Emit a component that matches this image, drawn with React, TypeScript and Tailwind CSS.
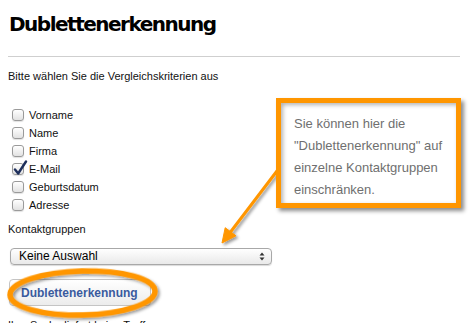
import React from "react";

const items = [
  { label: "Vorname", checked: false },
  { label: "Name", checked: false },
  { label: "Firma", checked: false },
  { label: "E-Mail", checked: true },
  { label: "Geburtsdatum", checked: false },
  { label: "Adresse", checked: false },
];

function Box({ checked }: { checked: boolean }) {
  return (
    <span className="relative inline-block w-[12px] h-[12px] rounded-[3px] border border-[#9a9a9a] bg-gradient-to-b from-[#ffffff] to-[#e2e2e2] shadow-[0_1px_1px_rgba(0,0,0,0.12)]">
      {checked && (
        <svg className="absolute left-[0px] top-[-4px]" width="15" height="16" viewBox="0 0 15 16">
          <path d="M2 9.5 L5.2 13.5 L13 1.5" fill="none" stroke="#1e2f5c" strokeWidth="2.4" strokeLinecap="round" strokeLinejoin="round" />
        </svg>
      )}
    </span>
  );
}

export default function App() {
  return (
    <div className="relative w-[469px] h-[323px] overflow-hidden bg-white text-[#111]" style={{ fontFamily: '"Liberation Sans", Arial, sans-serif' }}>
      <div className="pl-[8px]">
        <h1 className="mt-[12px] ml-[1px] h-[24px] leading-[24px] text-[20px] font-bold tracking-[-1.5px] text-black" style={{ fontFamily: '"DejaVu Sans", Verdana, sans-serif' }}>
          Dublettenerkennung
        </h1>
        <div className="mt-[20px] w-[452px] h-px bg-[#cfcfcf]" />
        <p className="mt-[13px] text-[11px] leading-[13px]">Bitte wählen Sie die Vergleichskriterien aus</p>
        <div className="mt-[23px] flex flex-col">
          {items.map((it) => (
            <div key={it.label} className="h-[18px] flex items-center pl-[4px] gap-[5px] text-[11px]">
              <Box checked={it.checked} />
              <span>{it.label}</span>
            </div>
          ))}
        </div>
        <p className="mt-[9px] text-[11px] leading-[13px]">Kontaktgruppen</p>
        <div className="mt-[12px] ml-[2px] w-[262px] h-[17px] rounded-[4px] border border-[#a8a8a8] bg-gradient-to-b from-[#ffffff] to-[#e9e9e9] shadow-[0_1px_1px_rgba(0,0,0,0.15)] flex items-center justify-between pl-[8px] pr-[6px]">
          <span className="text-[12px] leading-[15px] text-black">Keine Auswahl</span>
          <span className="flex flex-col items-center leading-none text-[#333]">
            <svg width="6" height="9" viewBox="0 0 6 9">
              <path d="M3 0.5 L5.5 3.5 L0.5 3.5 Z" fill="#333" />
              <path d="M3 8.5 L5.5 5.5 L0.5 5.5 Z" fill="#333" />
            </svg>
          </span>
        </div>
        <div className="mt-[14px] ml-[1px] w-[142px] h-[27px] rounded-[4px] border border-[#c4c4c4] bg-gradient-to-b from-[#ffffff] to-[#ececec] flex items-center pl-[11px]">
          <span className="text-[12px] font-bold text-[#3a5b9e]">Dublettenerkennung</span>
        </div>
        <p className="mt-[13px] text-[11px] leading-[13px]">Ihre Suche liefert keine Treffer.</p>
      </div>

      <svg className="absolute left-0 top-0 pointer-events-none" width="469" height="323" viewBox="0 0 469 323">
        <defs>
          <filter id="sh" x="-20%" y="-20%" width="140%" height="140%">
            <feDropShadow dx="2" dy="2" stdDeviation="1.5" floodColor="#000" floodOpacity="0.4" />
          </filter>
        </defs>
        <ellipse cx="82.5" cy="293" rx="72.5" ry="22" fill="none" stroke="#ff9600" strokeWidth="5.5" filter="url(#sh)" transform="rotate(-1.5 82.5 293)" />
        <g filter="url(#sh)">
          <line x1="280" y1="167" x2="229" y2="234" stroke="#ff9600" strokeWidth="3" strokeLinecap="round" />
          <path d="M222 243 L225.2 227.7 L236 235.8 Z" fill="#ff9600" stroke="#ff9600" strokeWidth="1" strokeLinejoin="round" />
        </g>
      </svg>

      <div className="absolute left-[276px] top-[98px] w-[185px] h-[110px] border-[5px] border-[#ff9600] bg-white shadow-[3px_3px_4px_rgba(0,0,0,0.45)]">
        <div className="w-full h-full shadow-[inset_2px_2px_4px_rgba(0,0,0,0.3)] pl-[13px] pt-[10px] text-[13px] leading-[22px] text-[#6f6f6f]">
          Sie können hier die
          <br />
          "Dublettenerkennung" auf
          <br />
          einzelne Kontaktgruppen
          <br />
          einschränken.
        </div>
      </div>
    </div>
  );
}
